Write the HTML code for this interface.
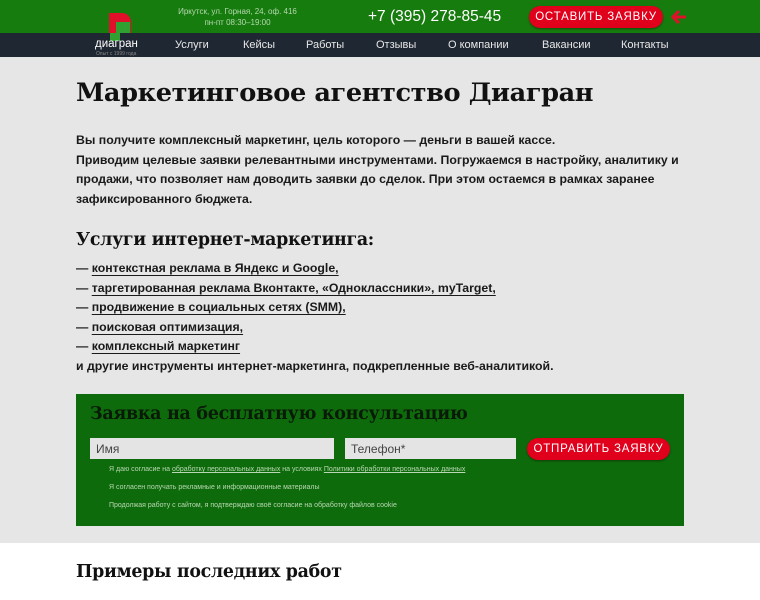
<!DOCTYPE html>
<html><head><meta charset="utf-8"><style>
*{margin:0;padding:0;box-sizing:border-box}
body{width:760px;height:600px;overflow:hidden;background:#fff;font-family:"Liberation Sans",sans-serif;}
.top{height:33px;background:#177c0e;position:relative;color:#fff}
.nav{height:24px;background:#1f2733;position:relative;color:#e8e8e8;font-size:11px}
.nav span{position:absolute;top:6px}
.main{background:#e6e6e6;height:486px;position:relative;padding:0 76px}
h1{font-family:"DejaVu Serif",serif;font-weight:bold;font-size:25.6px;color:#111;position:absolute;left:76px;letter-spacing:-0.4px}
h2{font-family:"DejaVu Serif",serif;font-weight:bold;font-size:17.4px;color:#111;position:absolute;left:76px;letter-spacing:-0.3px}
.p{position:absolute;left:76px;font-weight:bold;font-size:12.3px;color:#1a1a1a;line-height:19.6px;white-space:nowrap}
.p u{text-decoration:underline;text-decoration-thickness:1px;text-underline-offset:3px}
.form{position:absolute;left:76px;top:337px;width:608px;height:132px;background:#0e6b0b}
.btn{position:absolute;background:#e0001b;color:#fff;border-radius:13px;font-size:12px;letter-spacing:0.8px;text-align:center;box-shadow:0 1px 2px rgba(0,0,0,.4)}
.inp{position:absolute;top:44px;height:21px;background:#e4e4e4;font-size:12px;color:#444;padding:4px 6px}
.sm{position:absolute;left:33px;font-size:7px;color:#b9d7b4}
</style></head><body>
<div class="top">
 <div style="position:absolute;left:109px;top:13px;width:22px;height:20px;background:#e0102a;border-radius:0 9px 0 0"></div>
 <div style="position:absolute;left:116px;top:22px;width:14px;height:11px;background:#30a030"></div>
 <div style="position:absolute;left:165px;top:6px;font-size:8px;color:#b5d8b0;width:145px;text-align:center;line-height:11px;white-space:nowrap">Иркутск, ул. Горная, 24, оф. 416<br>пн-пт 08:30–19:00</div>
 <div style="position:absolute;left:368px;top:8px;font-size:15.5px">+7 (395) 278-85-45</div>
 <div class="btn" style="left:529px;top:6px;width:134px;height:22px;line-height:22px;font-size:11.5px;border-radius:11px">ОСТАВИТЬ ЗАЯВКУ</div>
 <svg style="position:absolute;left:671px;top:10px" width="16" height="14" viewBox="0 0 16 14"><path d="M8 1L2 7l6 6M2 7h13" stroke="#e0102a" stroke-width="3" fill="none"/></svg>
</div>
<div class="nav">
 <div style="position:absolute;left:110px;top:0;width:10px;height:8px;background:#30a030"></div>
 <span style="left:95px;top:5px;font-size:11.5px;color:#fff">диагран</span>
 <span style="left:96px;top:18px;font-size:5px;color:#888">Опыт с 1999 года</span>
 <span style="left:175px">Услуги</span><span style="left:243px">Кейсы</span><span style="left:306px">Работы</span><span style="left:376px">Отзывы</span><span style="left:448px">О компании</span><span style="left:542px">Вакансии</span><span style="left:621px">Контакты</span>
</div>
<div class="main">
 <h1 style="top:21px">Маркетинговое агентство Диагран</h1>
 <div class="p" style="top:74px">Вы получите комплексный маркетинг, цель которого — деньги в вашей кассе.<br>Приводим целевые заявки релевантными инструментами. Погружаемся в настройку, аналитику и<br>продажи, что позволяет нам доводить заявки до сделок. При этом остаемся в рамках заранее<br>зафиксированного бюджета.</div>
 <h2 style="top:173px">Услуги интернет-маркетинга:</h2>
 <div class="p" style="top:202px">— <u>контекстная реклама в Яндекс и Google,</u><br>— <u>таргетированная реклама Вконтакте, «Одноклассники», myTarget,</u><br>— <u>продвижение в социальных сетях (SMM),</u><br>— <u>поисковая оптимизация,</u><br>— <u>комплексный маркетинг</u><br>и другие инструменты интернет-маркетинга, подкрепленные веб-аналитикой.</div>
 <div class="form">
  <div style="position:absolute;left:14px;top:10px;font-family:'DejaVu Serif',serif;font-weight:bold;font-size:17.5px;color:#0a1a08;letter-spacing:-0.3px">Заявка на бесплатную консультацию</div>
  <div class="inp" style="left:14px;width:244px">Имя</div>
  <div class="inp" style="left:269px;width:171px">Телефон*</div>
  <div class="btn" style="left:451px;top:44px;width:143px;height:22px;line-height:22px;font-size:11.5px;border-radius:11px">ОТПРАВИТЬ ЗАЯВКУ</div>
  <div class="sm" style="top:72px">Я даю согласие на <u>обработку персональных данных</u> на условиях <u>Политики обработки персональных данных</u></div>
  <div class="sm" style="top:90px">Я согласен получать рекламные и информационные материалы</div>
  <div class="sm" style="top:108px">Продолжая работу с сайтом, я подтверждаю своё согласие на обработку файлов cookie</div>
 </div>
</div>
<h1 style="top:562px;font-size:17.4px;letter-spacing:-0.3px">Примеры последних работ</h1>
</body></html>
